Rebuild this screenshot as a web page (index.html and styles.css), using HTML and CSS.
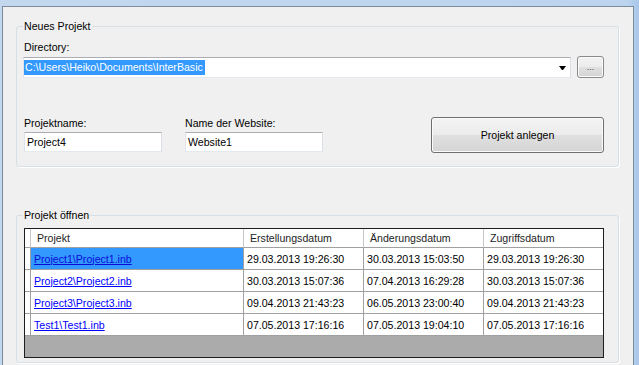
FILE: index.html
```html
<!DOCTYPE html>
<html lang="de">
<head>
<meta charset="utf-8">
<title>Projekt</title>
<link rel="stylesheet" href="styles.css">
</head>
<body>
<div class="window">
  <fieldset class="group group-new">
    <legend>Neues Projekt</legend>
    <div class="label">Directory:</div>
    <div class="dir-row">
      <div class="combo"><span class="sel">C:\Users\Heiko\Documents\InterBasic</span><span class="arrow"></span></div>
      <button class="btn btn-browse">...</button>
    </div>
    <div class="name-row">
      <div class="field">
        <div class="label">Projektname:</div>
        <div class="textbox">Project4</div>
      </div>
      <div class="field field-web">
        <div class="label">Name der Website:</div>
        <div class="textbox">Website1</div>
      </div>
      <button class="btn btn-create">Projekt anlegen</button>
    </div>
  </fieldset>

  <fieldset class="group group-open">
    <legend>Projekt öffnen</legend>
    <div class="grid">
      <div class="row head">
        <div class="cell rh"></div>
        <div class="cell">Projekt</div>
        <div class="cell">Erstellungsdatum</div>
        <div class="cell">Änderungsdatum</div>
        <div class="cell last">Zugriffsdatum</div>
      </div>
      <div class="row">
        <div class="cell rh"></div>
        <div class="cell selected"><a href="#">Project1\Project1.inb</a></div>
        <div class="cell">29.03.2013 19:26:30</div>
        <div class="cell">30.03.2013 15:03:50</div>
        <div class="cell last">29.03.2013 19:26:30</div>
      </div>
      <div class="row">
        <div class="cell rh"></div>
        <div class="cell"><a href="#">Project2\Project2.inb</a></div>
        <div class="cell">30.03.2013 15:07:36</div>
        <div class="cell">07.04.2013 16:29:28</div>
        <div class="cell last">30.03.2013 15:07:36</div>
      </div>
      <div class="row">
        <div class="cell rh"></div>
        <div class="cell"><a href="#">Project3\Project3.inb</a></div>
        <div class="cell">09.04.2013 21:43:23</div>
        <div class="cell">06.05.2013 23:00:40</div>
        <div class="cell last">09.04.2013 21:43:23</div>
      </div>
      <div class="row">
        <div class="cell rh"></div>
        <div class="cell"><a href="#">Test1\Test1.inb</a></div>
        <div class="cell">07.05.2013 17:16:16</div>
        <div class="cell">07.05.2013 19:04:10</div>
        <div class="cell last">07.05.2013 17:16:16</div>
      </div>
    </div>
  </fieldset>
</div>
</body>
</html>
```
FILE: styles.css
```css
html, body {
  margin: 0;
  padding: 0;
  height: 100%;
  overflow: hidden;
}
body {
  background: linear-gradient(to right, #c3d8ef 0%, #bcd4ee 98%, #a9c7ea 100%);
  font-family: "Liberation Sans", Arial, sans-serif;
  font-size: 10.6px;
  color: #000;
}
.window {
  margin: 6px 0 0 2px;
  width: 632px;
  height: 359px;
  overflow: hidden;
  box-sizing: border-box;
  border: 1px solid #7d8c9b;
  border-bottom: none;
  background: #f0f0f0;
  padding-top: 0.1px;
}
.group {
  border: 1px solid #d5dfe5;
  border-radius: 3px;
  box-shadow: 1px 1px 0 #fff;
  min-width: 0;
}
.group legend {
  padding: 0 1px;
  margin-left: -1px;
  line-height: 13px;
}
.group-new {
  margin: 13px 14px 0 13px;
  padding: 8px 14px 13px 7px;
}
.group-open {
  margin: 42px 14px 0 13px;
  padding: 6px 14px 4px 7px;
}
.label {
  line-height: 13px;
  height: 13px;
  white-space: nowrap;
}
.dir-row {
  display: flex;
  align-items: flex-start;
  margin-top: 3px;
}
.combo {
  flex: 1;
  margin-left: -1px;
  height: 21px;
  box-sizing: border-box;
  border: 1px solid;
  border-color: #abadb3 #dbdfe6 #e3e9ef #e2e3ea;
  background: #fff;
  display: flex;
  align-items: center;
}
.sel {
  background: #3399ff;
  color: #fff;
  padding: 0 2px 0 1px;
  line-height: 15px;
  white-space: nowrap;
}
.arrow {
  margin-left: auto;
  margin-right: 4px;
  width: 1px;
  height: 0;
  border-left: 3px solid transparent;
  border-right: 3px solid transparent;
  border-top: 4px solid #000;
}
.btn {
  font-family: inherit;
  font-size: inherit;
  color: #000;
  padding: 0;
  border: 1px solid #707070;
  border-radius: 3px;
  background: linear-gradient(to bottom, #f3f3f3 0%, #ececec 50%, #e0e0e0 51%, #d4d4d4 100%);
  box-shadow: inset 0 0 0 1px #fbfbfb;
  box-sizing: border-box;
}
.btn-browse {
  width: 27px;
  height: 22px;
  margin-left: 6px;
  margin-top: -1px;
  font-size: 9px;
  color: #444;
  border-color: #8a8a8a;
}
.name-row {
  display: flex;
  align-items: flex-start;
  margin-top: 39px;
}
.field {
  width: 138px;
}
.field-web {
  margin-left: 23px;
}
.textbox {
  margin-top: 2px;
  height: 20px;
  box-sizing: border-box;
  border: 1px solid;
  border-color: #abadb3 #dbdfe6 #e3e9ef #e2e3ea;
  background: #fff;
  padding-left: 2px;
  line-height: 18px;
}
.btn-create {
  margin-left: auto;
  width: 173px;
  height: 36px;
}
.grid {
  height: 130px;
  box-sizing: border-box;
  border: 1px solid #1e1e1e;
  background: #ababab;
}
.row {
  display: grid;
  grid-template-columns: 6px 213px 120px 120px 119px;
  height: 22px;
}
.row.head {
  height: 19px;
}
.cell {
  box-sizing: border-box;
  background: #fff;
  border-right: 1px solid #a0a0a0;
  border-bottom: 1px solid #a0a0a0;
  padding-left: 3px;
  display: flex;
  align-items: center;
  white-space: nowrap;
  overflow: hidden;
}
.cell.last {
  border-right: none;
}
.cell.rh {
  padding: 0;
}
.head .cell {
  padding-left: 6px;
  color: #1e1e1e;
  border-right-color: #c8c8c8;
  border-bottom-color: #a0a0a0;
}
.head .cell.rh {
  padding: 0;
}
.cell.selected {
  background: #3399ff;
}
.cell a {
  color: #0000ff;
  text-decoration: underline;
}
.cell.selected a {
  color: #0a0ad8;
}
```
